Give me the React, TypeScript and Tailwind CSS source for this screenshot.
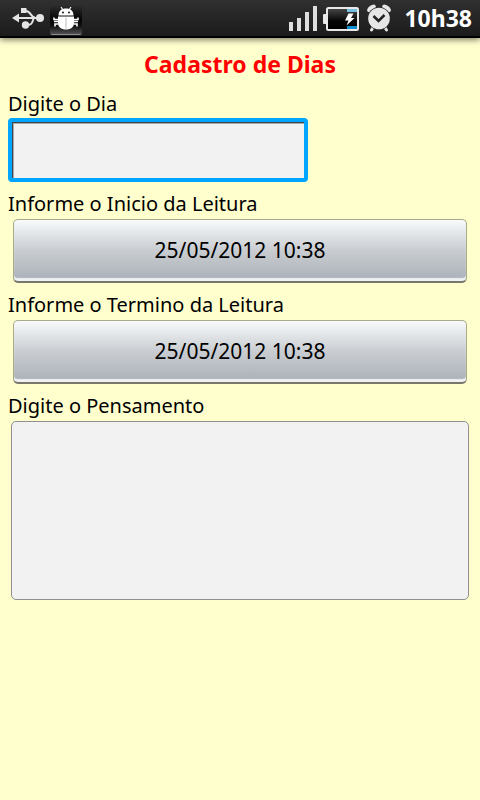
import { useState } from 'react';

function UsbIcon() {
  return (
    <svg width="34" height="36" viewBox="11 0 34 36" fill="#e4e4e4" aria-hidden="true">
      <path d="M12 18 19 13.500v9z" />
      <path d="M17 18h20M26 11c5 0 4 6 9 6.500M27 25c7 0 5-5 7-7" fill="none" stroke="#e4e4e4" strokeWidth="2" />
      <rect x="21" y="8" width="5.500" height="5" />
      <circle cx="40" cy="18" r="4" />
      <circle cx="25.500" cy="25" r="3.700" />
    </svg>
  );
}

function BugIcon() {
  return (
    <svg width="34" height="36" viewBox="49 0 34 36" fill="#ffffff" aria-hidden="true">
      <defs>
        <linearGradient id="bugTile" x1="0" y1="0" x2="0" y2="1">
          <stop offset="0" stopColor="#303030" />
          <stop offset="0.500" stopColor="#050505" />
          <stop offset="0.700" stopColor="#101010" />
          <stop offset="1" stopColor="#585858" />
        </linearGradient>
      </defs>
      <rect x="50" y="4" width="32" height="31" rx="2" fill="url(#bugTile)" />
      <path d="M51.500 34.500h29" stroke="#8c8c8c" strokeWidth="1" />
      <path d="M58.500 15.500c0-4.500 3-7 7.500-7s7.500 2.500 7.500 7z" />
      <path d="m61 7 2 3M71 7l-2 3" stroke="#ffffff" strokeWidth="1.200" />
      <circle cx="63" cy="12.500" r="0.900" fill="#000000" />
      <circle cx="69" cy="12.500" r="0.900" fill="#000000" />
      <path d="M58 16.500h16v6.500c0 4-3 6.500-8 6.500s-8-2.500-8-6.500z" />
      <path d="M66 17.500v11" stroke="#b8b8b8" strokeWidth="1" />
      <path d="M54 17.500v2h4M54 21.500h4M58 24h-3v2.500M78 17.500v2h-4M78 21.500h-4M74 24h3v2.500" fill="none" stroke="#ffffff" strokeWidth="1.600" />
    </svg>
  );
}

function SignalIcon() {
  return (
    <svg width="30" height="36" viewBox="288 0 30 36" fill="#dedede" aria-hidden="true">
      <rect x="289" y="22" width="4" height="9" />
      <rect x="297" y="18" width="4" height="13" />
      <rect x="305" y="12" width="4" height="19" />
      <rect x="313" y="6" width="4" height="25" />
    </svg>
  );
}

function BatteryIcon() {
  return (
    <svg width="38" height="36" viewBox="322 0 38 36" aria-hidden="true">
      <defs>
        <linearGradient id="cell" x1="0" y1="0" x2="0" y2="1">
          <stop offset="0" stopColor="#4a4a4a" />
          <stop offset="0.600" stopColor="#050505" />
          <stop offset="1" stopColor="#000000" />
        </linearGradient>
      </defs>
      <rect x="323" y="14" width="5" height="10" rx="1" fill="#e8e8e8" />
      <rect x="327" y="8" width="31" height="22" rx="1.500" fill="url(#cell)" stroke="#e8e8e8" strokeWidth="2" />
      <rect x="347" y="9" width="10" height="3" fill="#76bfe2" />
      <rect x="347" y="26" width="10" height="3" fill="#0a8fd0" />
      <path d="m348.500 13.500-3.500 7h3.500l-2 5 8-7.500h-3.500l2.500-4.500z" fill="#ffffff" />
    </svg>
  );
}

function AlarmIcon() {
  return (
    <svg width="26" height="36" viewBox="366 0 26 36" fill="#e6e6e6" aria-hidden="true">
      <path d="m371.500 30 2.500-4M386.500 30l-2.500-4" stroke="#e6e6e6" strokeWidth="3" strokeLinecap="round" />
      <ellipse cx="371.500" cy="8.500" rx="5" ry="3" transform="rotate(-38 371.500 8.500)" />
      <ellipse cx="386.500" cy="8.500" rx="5" ry="3" transform="rotate(38 386.500 8.500)" />
      <circle cx="379" cy="18.500" r="11.500" fill="#252525" />
      <circle cx="379" cy="18.500" r="10.800" />
      <path d="m373.500 16 5 5 6-6" fill="none" stroke="#222222" strokeWidth="2.500" />
    </svg>
  );
}

function StatusBar() {
  return (
    <header className="flex h-[38px] items-center justify-between border-b-2 border-black bg-linear-to-b from-[#303030] to-[#1b1b1b] pr-2 pl-[11px] shadow-[0_2px_6px_rgba(0,0,0,0.5)]">
      <div className="flex items-center gap-1">
        <UsbIcon />
        <BugIcon />
      </div>
      <div className="flex items-center">
        <SignalIcon />
        <div className="ml-1 flex items-center gap-1.5">
          <BatteryIcon />
          <AlarmIcon />
        </div>
        <time className="ml-3 text-[23px] leading-9 font-bold text-white">10h38</time>
      </div>
    </header>
  );
}

interface DateFieldProps {
  id: string;
  label: string;
  value: string;
}

function DateField({ id, label, value }: DateFieldProps) {
  return (
    <div>
      <label htmlFor={id} className="block px-2 pt-2 pb-px text-[20px] leading-7">{label}</label>
      <div className="px-[13px]">
        <button
          id={id}
          type="button"
          className="block h-16 w-full rounded-[5px] border border-[#aaaa8a] border-b-2 border-b-[#77776a] bg-linear-to-b from-[#f8fafb] via-[#c9cdd1] to-[#aab0b8] pt-px text-[21px] shadow-[inset_0_-3px_1px_#f0f1f2]"
        >
          {value}
        </button>
      </div>
    </div>
  );
}

export default function App() {
  const [dia, setDia] = useState('');
  const [pensamento, setPensamento] = useState('');

  return (
    <div className="min-h-screen bg-[#ffffce] font-['Noto_Sans',sans-serif] text-black">
      <StatusBar />
      <main>
        <h1 className="pt-2 text-center text-[23px] leading-9 font-bold text-[#ff0000]">Cadastro de Dias</h1>
        <form>
          <div>
            <label htmlFor="dia" className="block px-2 pt-2 text-[20px] leading-7">Digite o Dia</label>
            <div className="px-2">
              <input
                id="dia"
                type="text"
                value={dia}
                autoComplete="off"
                onChange={e => setDia(e.target.value)}
                className="block h-16 w-[300px] rounded-[4px] border-4 border-[#00a5ff] bg-[#f2f2f2] px-2 text-[20px] shadow-[inset_1px_1px_0_#444444,inset_2px_2px_0_#aaaaaa] outline-none"
              />
            </div>
          </div>
          <DateField id="inicio" label="Informe o Inicio da Leitura" value="25/05/2012 10:38" />
          <DateField id="termino" label="Informe o Termino da Leitura" value="25/05/2012 10:38" />
          <div>
            <label htmlFor="pensamento" className="block px-2 pt-2 pb-px text-[20px] leading-7">Digite o Pensamento</label>
            <div className="px-[11px]">
              <textarea
                id="pensamento"
                value={pensamento}
                onChange={e => setPensamento(e.target.value)}
                className="block h-[179px] w-full resize-none rounded-[5px] border border-[#909090] bg-[#f2f2f2] p-3 text-[20px] outline-none"
              />
            </div>
          </div>
        </form>
      </main>
    </div>
  );
}
